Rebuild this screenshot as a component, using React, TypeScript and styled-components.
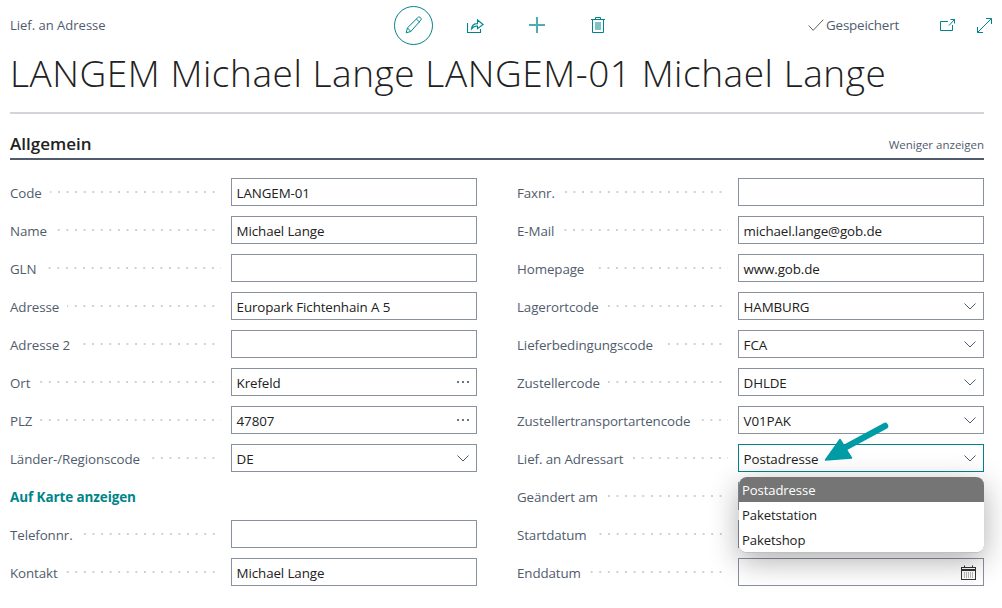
import React from 'react';
import styled, { createGlobalStyle } from 'styled-components';

const Global = createGlobalStyle`
  html, body { margin: 0; padding: 0; background: #fff; }
  body { font-family: "Open Sans", "Noto Sans", sans-serif; overflow: hidden; }
`;

const Page = styled.div`
  position: relative;
  width: 1002px;
  height: 608px;
  padding: 0 18px 0 10px;
  box-sizing: border-box;
  overflow: hidden;
`;

const TopBar = styled.div`
  display: grid;
  grid-template-columns: 373px auto 1fr;
  align-items: center;
  height: 50px;
  margin-right: -18px;
`;
const Crumb = styled.div`
  font-size: 13px;
  color: #505c6d;
`;
const Actions = styled.div`
  display: flex;
  align-items: center;
`;
const ActionSlot = styled.div`
  width: 61.5px;
  height: 38px;
  display: flex;
  align-items: center;
  justify-content: center;
`;
const EditCircle = styled.div`
  width: 37px;
  height: 37px;
  border: 1px solid #00848a;
  border-radius: 50%;
  display: flex;
  align-items: center;
  justify-content: center;
`;
const Status = styled.div`
  display: flex;
  align-items: center;
  justify-content: flex-end;
  padding-right: 10px;
  gap: 2px;
`;
const Saved = styled.span`
  font-size: 13.4px;
  letter-spacing: -0.2px;
  color: #505c6d;
  margin-right: 39px;
`;
const Win = styled.div`
  display: flex;
  align-items: center;
  gap: 22px;
`;
const Title = styled.h1`
  margin: 0;
  height: 46px;
  line-height: 46px;
  font-size: 37px;
  letter-spacing: 0.55px;
  font-weight: 300;
  color: #212121;
  white-space: nowrap;
`;
const Rule = styled.div`
  height: 2px;
  background: #d2d6da;
  margin-top: 16px;
`;
const SectionHead = styled.div`
  display: flex;
  justify-content: space-between;
  align-items: flex-end;
  height: 46px;
  box-sizing: border-box;
  border-bottom: 2px solid #505c6d;
  margin-bottom: 18px;
  padding-bottom: 3px;
`;
const SectionTitle = styled.div`
  font-size: 17px;
  font-weight: 600;
  color: #212121;
  line-height: 22px;
`;
const Toggle = styled.div`
  font-size: 11.5px;
  color: #505c6d;
  line-height: 20px;
`;
const Columns = styled.div`
  display: grid;
  grid-template-columns: 467px 467px;
  column-gap: 40px;
`;
const Column = styled.div`
  display: flex;
  flex-direction: column;
  gap: 10px;
`;
const Row = styled.div`
  display: grid;
  grid-template-columns: 221px 246px;
  height: 28px;
  align-items: center;
`;
const LabelCell = styled.div`
  display: flex;
  align-items: center;
  padding-right: 10px;
  min-width: 0;
`;
const Label = styled.span`
  font-size: 13.35px;
  color: #505c6d;
  white-space: nowrap;
  letter-spacing: -0.1px;
  padding-top: 1px;
`;
const Dots = styled.span`
  flex: 1;
  height: 2px;
  margin-left: 8px;
  background: radial-gradient(circle at 1px 1px, #d0d0d0 1px, transparent 1.1px) right center / 8.6px 2px repeat-x;
`;
const Field = styled.div<{ $focus?: boolean }>`
  height: 28px;
  box-sizing: border-box;
  border: 1px solid ${p => (p.$focus ? '#00848a' : '#8a919e')};
  background: #fff;
  display: flex;
  align-items: center;
  justify-content: space-between;
  padding: 0 5px 0 4.6px;
  font-size: 13.35px;
  color: #212121;
  letter-spacing: -0.1px;
`;
const Value = styled.span`
  padding-top: 1px;
`;
const Link = styled.div`
  font-size: 13.5px;
  font-weight: 700;
  color: #00848a;
  height: 28px;
  line-height: 30px;
  letter-spacing: -0.1px;
`;
const FieldIcon = styled.span`
  display: flex;
  align-items: center;
  margin-right: 2px;
`;
const Menu = styled.div`
  position: absolute;
  left: 739px;
  top: 477px;
  width: 245px;
  height: 76px;
  border-radius: 8px;
  background: #fff;
  overflow: hidden;
  border-bottom: 1px solid #c0c0c0;
  box-sizing: border-box;
  box-shadow: 0 8px 30px rgba(0, 0, 0, 0.32);
  z-index: 2;
`;
const MenuItem = styled.div<{ $active?: boolean }>`
  height: 25px;
  line-height: 27px;
  padding: 0 3px;
  font-size: 13.1px;
  letter-spacing: -0.1px;
  background: ${p => (p.$active ? '#757575' : '#fff')};
  color: ${p => (p.$active ? '#fff' : '#212121')};
`;
const Arrow = styled.svg`
  position: absolute;
  left: 815px;
  top: 415px;
  z-index: 3;
`;

const Chevron = () => (
  <svg width="12" height="7" viewBox="0 0 12 7" fill="none">
    <path d="M.5.5L6 6 11.5.5" stroke="#505c6d" strokeWidth="1" />
  </svg>
);
const More = () => (
  <svg width="12" height="4" viewBox="0 0 12 4">
    <rect x="0" y="1" width="2" height="2" fill="#6a7482" />
    <rect x="5" y="1" width="2" height="2" fill="#6a7482" />
    <rect x="10" y="1" width="2" height="2" fill="#6a7482" />
  </svg>
);
const Calendar = () => (
  <svg width="15" height="15" viewBox="0 0 15 15" fill="none">
    <rect x="0.5" y="2.5" width="14" height="12" stroke="#333" />
    <path d="M0.5 5h14" stroke="#333" strokeWidth="2" />
    <path d="M3.5 0.5v2M11.5 0.5v2" stroke="#333" />
    <path d="M3 8h9M3 10h9M3 12h9" stroke="#777" strokeDasharray="1 1" />
  </svg>
);

type F = { label: string; value?: string; icon?: 'chev' | 'more' | 'cal'; focus?: boolean };

const left: F[] = [
  { label: 'Code', value: 'LANGEM-01' },
  { label: 'Name', value: 'Michael Lange' },
  { label: 'GLN' },
  { label: 'Adresse', value: 'Europark Fichtenhain A 5' },
  { label: 'Adresse 2' },
  { label: 'Ort', value: 'Krefeld', icon: 'more' },
  { label: 'PLZ', value: '47807', icon: 'more' },
  { label: 'Länder-/Regionscode', value: 'DE', icon: 'chev' },
];
const leftEnd: F[] = [
  { label: 'Telefonnr.' },
  { label: 'Kontakt', value: 'Michael Lange' },
];
const right: F[] = [
  { label: 'Faxnr.' },
  { label: 'E-Mail', value: 'michael.lange@gob.de' },
  { label: 'Homepage', value: 'www.gob.de' },
  { label: 'Lagerortcode', value: 'HAMBURG', icon: 'chev' },
  { label: 'Lieferbedingungscode', value: 'FCA', icon: 'chev' },
  { label: 'Zustellercode', value: 'DHLDE', icon: 'chev' },
  { label: 'Zustellertransportartencode', value: 'V01PAK', icon: 'chev' },
  { label: 'Lief. an Adressart', value: 'Postadresse', icon: 'chev', focus: true },
  { label: 'Geändert am' },
  { label: 'Startdatum', icon: 'cal' },
  { label: 'Enddatum', icon: 'cal' },
];

const FieldRow = ({ label, value, icon, focus }: F) => (
  <Row>
    <LabelCell>
      <Label>{label}</Label>
      <Dots />
    </LabelCell>
    <Field $focus={focus}>
      <Value>{value}</Value>
      {icon && (
        <FieldIcon>
          {icon === 'chev' ? <Chevron /> : icon === 'more' ? <More /> : <Calendar />}
        </FieldIcon>
      )}
    </Field>
  </Row>
);

const teal = '#00848a';

export default function App() {
  return (
    <Page>
      <Global />
      <TopBar>
        <Crumb>Lief. an Adresse</Crumb>
        <Actions>
          <ActionSlot>
            <EditCircle>
              <svg width="18" height="18" viewBox="0 0 18 18" fill="none" stroke={teal}>
                <path d="M1.2 16.8l1.3-5L12.8 1.6c.8-.8 2-.8 2.8 0 .8.8.8 2 0 2.8L5.8 15.5z" />
                <path d="M2.5 11.8l3.3 3.7M11.4 3l3.6 3.4" />
              </svg>
            </EditCircle>
          </ActionSlot>
          <ActionSlot>
            <svg width="17" height="15" viewBox="0 0 17 15" fill="none" stroke={teal}>
              <path d="M.5 5v9.5h13V11" strokeWidth="1.1" />
              <path d="M4.5 11c.3-3.5 2.7-5.4 6-5.4V2l5.6 4.5-5.6 4.2V8C8 7.8 6 9 4.5 11z" strokeWidth="1.1" />
            </svg>
          </ActionSlot>
          <ActionSlot>
            <svg width="16" height="16" viewBox="0 0 16 16" stroke="#4fadb1" strokeWidth="2" fill="none">
              <path d="M8 0v16M0 8h16" />
            </svg>
          </ActionSlot>
          <ActionSlot>
            <svg width="14" height="16" viewBox="0 0 14 16" fill="none" stroke={teal}>
              <path d="M0 2.5h14M4.5 2.5V.5h5v2M1.5 2.5v13h11v-13" />
              <path d="M5 5v8M7 5v8M9 5v8" />
            </svg>
          </ActionSlot>
        </Actions>
        <Status>
          <svg width="16" height="12" viewBox="0 0 16 12" fill="none" stroke="#605e5c">
            <path d="M.7 6.5l4.5 4.8L15.3.7" />
          </svg>
          <Saved>Gespeichert</Saved>
          <Win>
            <svg width="15" height="12" viewBox="0 0 15 12" fill="none" stroke={teal}>
              <path d="M8 2.5H.5v9h12V6" />
              <path d="M9 6.5L14.5.5M10.5.5h4v4" />
            </svg>
            <svg width="15" height="15" viewBox="0 0 15 15" fill="none" stroke={teal}>
              <path d="M.7 14.3L14.3.7M9 .5h5.5V6M.5 9v5.5H6" />
            </svg>
          </Win>
        </Status>
      </TopBar>
      <Title>LANGEM Michael Lange LANGEM-01 Michael Lange</Title>
      <Rule />
      <SectionHead>
        <SectionTitle>Allgemein</SectionTitle>
        <Toggle>Weniger anzeigen</Toggle>
      </SectionHead>
      <Columns>
        <Column>
          {left.map(f => <FieldRow key={f.label} {...f} />)}
          <Link>Auf Karte anzeigen</Link>
          {leftEnd.map(f => <FieldRow key={f.label} {...f} />)}
        </Column>
        <Column>
          {right.map(f => <FieldRow key={f.label} {...f} />)}
        </Column>
      </Columns>
      <Menu>
        <MenuItem $active>Postadresse</MenuItem>
        <MenuItem>Paketstation</MenuItem>
        <MenuItem>Paketshop</MenuItem>
      </Menu>
      <Arrow width="80" height="55" viewBox="815 415 80 55" fill="none">
        <path d="M885 426L835 453" stroke="#009ca6" strokeWidth="6.5" strokeLinecap="round" />
        <path d="M825.5 460L840 439.5L851.5 458Z" fill="#009ca6" stroke="#009ca6" strokeWidth="1.5" strokeLinejoin="round" />
      </Arrow>
    </Page>
  );
}
